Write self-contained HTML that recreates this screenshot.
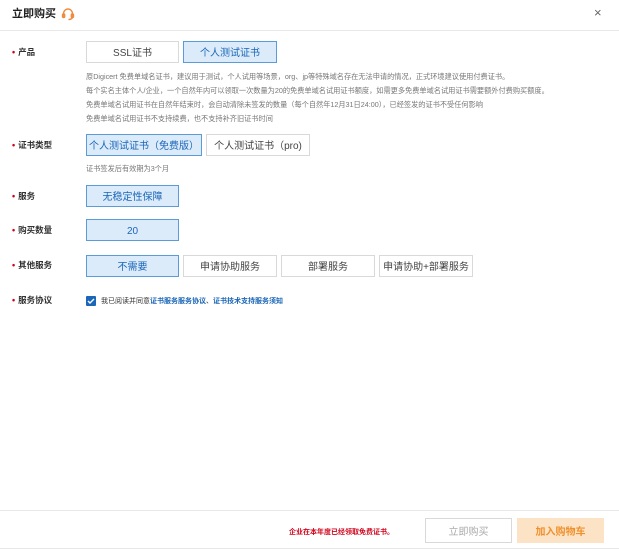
<!DOCTYPE html>
<html><head><meta charset="utf-8"><style>
*{margin:0;padding:0;box-sizing:border-box}
body{width:619px;height:550px;background:#fff;font-family:"Liberation Sans","Noto Sans CJK SC",sans-serif;position:relative;overflow:hidden;color:#333}
.a{position:absolute}
.hd{left:0;top:0;width:619px;height:31px;border-bottom:1px solid #e8e8e8}
.title{left:12px;top:7px;font-size:11px;line-height:14px;font-weight:bold;color:#222}
.lbl{left:12px;font-size:8.5px;line-height:11px;font-weight:bold;color:#333}
.lbl b{color:#d0021b;margin-right:3px;font-size:9px}
.btn{border:1px solid #d9d9d9;background:#fff;font-size:10px;line-height:20px;padding-top:2px;color:#444;text-align:center;height:22px;white-space:nowrap}
.on{background:#dcebfa;border-color:#5b9bd8;color:#1a66b8}
.desc{left:86px;font-size:7.2px;line-height:9px;color:#777;white-space:nowrap}
</style></head><body>
<div class="a hd"></div>
<div class="a title">立即购买</div>
<svg class="a" style="left:61px;top:7px" width="14" height="14" viewBox="0 0 14 14" fill="none" stroke="#f08a3c" stroke-width="1.4"><path d="M2.5 8V6.5a4.5 4.5 0 0 1 9 0V8"/><rect x="1.5" y="7" width="2.2" height="3.5" rx="1" fill="#f08a3c"/><rect x="10.3" y="7" width="2.2" height="3.5" rx="1" fill="#f08a3c"/><path d="M11.5 10.5q-1 2-4 2"/></svg>
<div class="a" style="left:594px;top:6px;font-size:13px;line-height:14px;color:#666">×</div>

<div class="a lbl" style="top:47px"><b>•</b>产品</div>
<div class="a btn" style="left:86px;top:41px;width:93px">SSL证书</div>
<div class="a btn on" style="left:183px;top:41px;width:94px">个人测试证书</div>
<div class="a desc" style="top:72px">原Digicert 免费单域名证书，建议用于测试，个人试用等场景，org、jp等特殊域名存在无法申请的情况，正式环境建议使用付费证书。</div>
<div class="a desc" style="top:86px">每个实名主体个人/企业，一个自然年内可以领取一次数量为20的免费单域名试用证书额度，如需更多免费单域名试用证书需要额外付费购买额度。</div>
<div class="a desc" style="top:100px">免费单域名试用证书在自然年结束时，会自动清除未签发的数量（每个自然年12月31日24:00），已经签发的证书不受任何影响</div>
<div class="a desc" style="top:114px">免费单域名试用证书不支持续费，也不支持补齐旧证书时间</div>

<div class="a lbl" style="top:140px"><b>•</b>证书类型</div>
<div class="a btn on" style="left:86px;top:134px;width:116px">个人测试证书（免费版）</div>
<div class="a btn" style="left:206px;top:134px;width:104px">个人测试证书（pro)</div>
<div class="a desc" style="top:164px">证书签发后有效期为3个月</div>

<div class="a lbl" style="top:191px"><b>•</b>服务</div>
<div class="a btn on" style="left:86px;top:185px;width:93px">无稳定性保障</div>

<div class="a lbl" style="top:225px"><b>•</b>购买数量</div>
<div class="a btn on" style="left:86px;top:219px;width:93px">20</div>

<div class="a lbl" style="top:260px"><b>•</b>其他服务</div>
<div class="a btn on" style="left:86px;top:255px;width:93px">不需要</div>
<div class="a btn" style="left:183px;top:255px;width:94px">申请协助服务</div>
<div class="a btn" style="left:281px;top:255px;width:94px">部署服务</div>
<div class="a btn" style="left:379px;top:255px;width:94px">申请协助+部署服务</div>

<div class="a lbl" style="top:295px"><b>•</b>服务协议</div>
<div class="a" style="left:86px;top:296px;width:10px;height:10px;background:#1a66b8;border-radius:1px"><svg width="10" height="10" viewBox="0 0 10 10" style="display:block"><path d="M2 5l2 2 4-4" stroke="#fff" stroke-width="1.4" fill="none"/></svg></div>
<div class="a" style="left:101px;top:297px;font-size:7px;line-height:9px;color:#333">我已阅读并同意<span style="color:#1a66b8;font-weight:bold">证书服务服务协议</span>、<span style="color:#1a66b8;font-weight:bold">证书技术支持服务须知</span></div>

<div class="a" style="left:0;top:510px;width:619px;border-top:1px solid #e8e8e8"></div>
<div class="a" style="left:289px;top:528px;font-size:7px;line-height:9px;color:#d0021b;font-weight:bold">企业在本年度已经领取免费证书。</div>
<div class="a btn" style="left:425px;top:518px;width:87px;height:25px;line-height:23px;color:#aaa">立即购买</div>
<div class="a btn" style="left:517px;top:518px;width:87px;height:25px;line-height:23px;background:#fde3c6;border-color:#fde3c6;color:#f0902c;font-weight:bold">加入购物车</div>
<div class="a" style="left:0;top:548px;width:619px;border-top:1px solid #e8e8e8"></div>
</body></html>
